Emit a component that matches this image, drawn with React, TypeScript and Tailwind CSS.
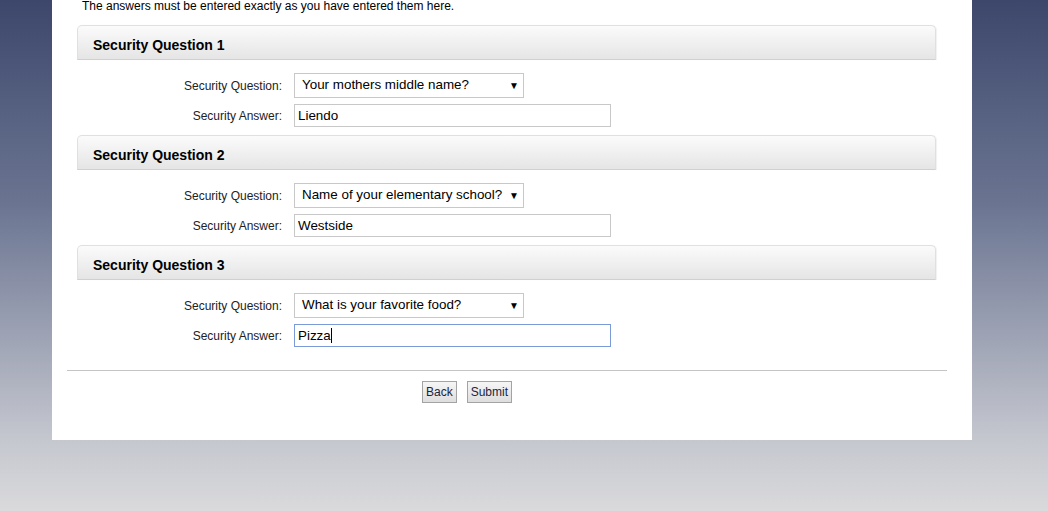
import { useState } from "react";

// ─── Data ─────────────────────────────────────────────────────────────────────

const questions = [
  "Your mothers middle name?",
  "Name of your elementary school?",
  "What is your favorite food?",
  "City you were born in?",
  "Name of your first pet?",
];

const initial = [
  { question: questions[0], answer: "Liendo" },
  { question: questions[1], answer: "Westside" },
  { question: questions[2], answer: "Pizza" },
];

// ─── Section ──────────────────────────────────────────────────────────────────

function QuestionSection({
  index,
  question,
  answer,
  focused,
  onQuestion,
  onAnswer,
}: {
  index: number;
  question: string;
  answer: string;
  focused?: boolean;
  onQuestion: (v: string) => void;
  onAnswer: (v: string) => void;
}) {
  return (
    <div className="ml-[10px] w-[859px]">
      <div className="flex h-[35px] items-center rounded-t-[5px] border border-b-[#d0d0d0] border-[#e0e0e0] bg-gradient-to-b from-[#fbfbfb] to-[#e5e5e5] pl-[15px] pt-[5px] text-[14px] font-bold text-black shadow-[1px_0_1px_rgba(0,0,0,0.06)]">
        Security Question {index}
      </div>

      <div className="flex flex-col gap-[6px] pt-[13px] pb-[8px] text-[12px] text-[#222]">
        <div className="flex items-center">
          <label className="w-[205px] text-right">Security Question:</label>
          <div className="relative ml-3 h-[25px] w-[230px]">
            <select
              value={question}
              onChange={(e) => onQuestion(e.target.value)}
              className="h-full w-full appearance-none border border-[#c8c8c8] bg-white pl-[7px] text-[13.4px] text-black outline-none"
            >
              {questions.map((q) => (
                <option key={q}>{q}</option>
              ))}
            </select>
            <span className="pointer-events-none absolute right-[5px] top-[5px] text-[10px] text-black">
              ▼
            </span>
          </div>
        </div>

        <div className="flex items-center">
          <label className="w-[205px] text-right">Security Answer:</label>
          <div className="relative ml-3 h-[23px] w-[317px]">
            <input
              value={answer}
              onChange={(e) => onAnswer(e.target.value)}
              className={
                focused
                  ? "h-full w-full border border-[#7b9ad8] bg-white px-[3px] text-[13.4px] text-black outline-none"
                  : "h-full w-full border border-[#c8c8c8] bg-white px-[3px] text-[13.4px] text-black outline-none"
              }
            />
            {focused && (
              <span className="pointer-events-none absolute left-[37px] top-[4px] h-[15px] w-px bg-black" />
            )}
          </div>
        </div>
      </div>
    </div>
  );
}

// ─── Page ─────────────────────────────────────────────────────────────────────

export default function App() {
  const [items, setItems] = useState(initial);

  const update = (i: number, key: "question" | "answer", v: string) =>
    setItems((prev) => prev.map((it, j) => (j === i ? { ...it, [key]: v } : it)));

  return (
    <div
      className="h-[511px] w-full overflow-hidden bg-[linear-gradient(to_bottom,#3d476b_0%,#6b7592_40%,#c5c7cf_86%,#dadadc_100%)]"
      style={{ fontFamily: '"Liberation Sans", Arial, sans-serif' }}
    >
      <div className="ml-[52px] h-[441px] w-[920px] bg-white pl-[15px] pr-[25px]">
        <p className="-mt-px pl-[15px] text-[12px] leading-[14px] text-black">
          The answers must be entered exactly as you have entered them here.
        </p>

        <div className="mt-[12px]">
          {items.map((it, i) => (
            <QuestionSection
              key={i}
              index={i + 1}
              question={it.question}
              answer={it.answer}
              focused={i === 2}
              onQuestion={(v) => update(i, "question", v)}
              onAnswer={(v) => update(i, "answer", v)}
            />
          ))}
        </div>

        <hr className="mt-[15px] border-t border-[#c4c4c4]" />

        <div className="mt-[10px] flex justify-center gap-[10px] pr-[80px]">
          <button className="h-[22px] border border-[#a3a3a3] bg-gradient-to-b from-[#f6f6f6] to-[#dedede] px-[3px] text-[12px] text-[#1a2340]">
            Back
          </button>
          <button className="h-[22px] border border-[#a3a3a3] bg-gradient-to-b from-[#f6f6f6] to-[#dedede] px-[3px] text-[12px] text-[#1a2340]">
            Submit
          </button>
        </div>
      </div>
    </div>
  );
}
